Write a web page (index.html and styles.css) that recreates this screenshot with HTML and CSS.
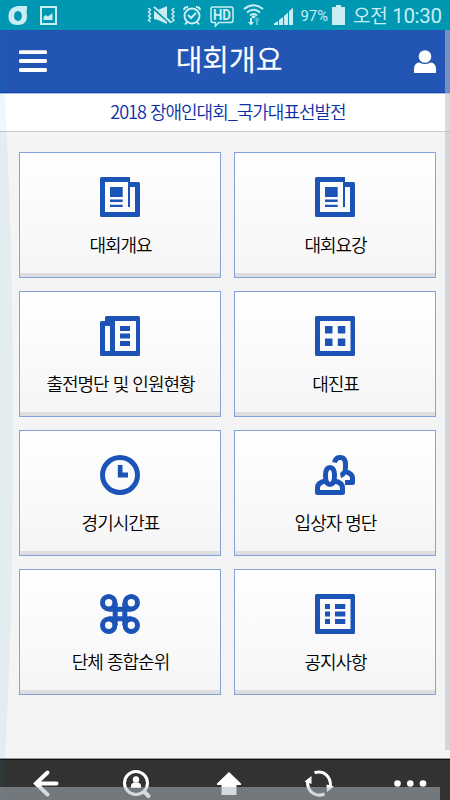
FILE: index.html
```html
<!DOCTYPE html>
<html lang="ko">
<head>
<meta charset="utf-8">
<meta name="viewport" content="width=device-width, initial-scale=1">
<title>대회개요</title>
<link rel="stylesheet" href="styles.css">
</head>
<body>
<svg class="defs" width="0" height="0" aria-hidden="true">
  <symbol id="news" viewBox="0 0 40 40">
    <path fill-rule="evenodd" d="M1.500 0H30V5H38.500Q40 5 40 6.500V38.500Q40 40 38.500 40H1.500Q0 40 0 38.500V1.500Q0 0 1.500 0ZM5 5V35H35V10H30V30H28V5ZM10 10H22.700V20H10ZM10 22.500H22.700V25H10ZM10 27.700H22.700V30H10Z"/>
  </symbol>
</svg>
<div class="screen">
  <div class="status">
    <svg class="status-icons" viewBox="0 0 350 30" width="350" height="30">
      <path class="fill" fill-rule="evenodd" d="M27 6V10.500H26.300Q27 13 27 16C27 22 24 25 17.500 25C11.500 25 8.500 22 8.500 16.500C8.500 10 12 6.500 19 6ZM18 11C12.800 11 12.800 21 18 21C23.200 21 23.200 11 18 11Z"/>
      <rect class="line" x="41" y="7" width="15" height="17"/>
      <path class="fill" d="M43.500 20V17L46 15L48 16.500L52.500 13V20Z"/>
      <path class="line thin" d="M148.500 8L150.500 10L148.500 12L150.500 14L148.500 16L150.500 18L148.500 20L150.500 22M174 8L172 10L174 12L172 14L174 16L172 18L174 20L172 22"/>
      <path class="fill" d="M154 11V19L158 20L167 24V22L154 10.500ZM158 10L167 6V18ZM153 7L155 6.500L172 22L170.500 23.500Z"/>
      <circle class="line" cx="192" cy="16" r="7.500"/>
      <path class="line" d="M188 15L191 18L196 13M184 10Q184 7 188 7M200 10Q200 7 196 7M187 22L185 24.500M197 22L199 24.500"/>
      <path class="line thin" d="M213 7H231Q233 7 233 9V20Q233 22.500 231 22.500H219L215.500 26V22.500H213Q211 22.500 211 20V9Q211 7 213 7Z"/>
      <text class="hd" x="213" y="20" textLength="18" lengthAdjust="spacingAndGlyphs">HD</text>
      <path class="line" d="M244 9Q253.500 1.500 263 9M247 12.500Q253.500 7 260 12.500M250 15.500Q253.500 12.500 257 15.500"/>
      <path class="fill" d="M253.500 15L256 17L253.500 18.500L251 17ZM250 18H252V22H254L251 25.500L248 22H250Z"/>
      <path class="fill dim" d="M256 25V20.500H254L257 17L260 20.500H258V25Z"/>
      <path class="fill" d="M274 25V23.500L278 21V25ZM279 25V20L283 17V25ZM284 25V16L288 12.500V25ZM289 25V11.500L293 7.500V25Z"/>
      <text class="percent" x="300.500" y="21" textLength="27.500" lengthAdjust="spacingAndGlyphs">97%</text>
      <path class="fill" d="M332 7H336V5H341V7H345V25H332Z"/>
    </svg>
    <span class="time"><b>오전</b> 10:30</span>
  </div>
  <header class="header">
    <svg class="menu" viewBox="0 0 28 24" width="28" height="24"><path d="M1.700 3.200H26.300M1.700 12H26.300M1.700 21H26.300"/></svg>
    <h1>대회개요</h1>
    <svg class="user" viewBox="0 0 22 24" width="22" height="24"><circle cx="11" cy="7.500" r="6.300"/><path d="M0 24V20Q0 14 5.500 13.500Q8 15 11 15Q14 15 16.500 13.500Q22 14 22 20V24Z"/></svg>
  </header>
  <div class="subtitle"><span>2018 장애인대회_국가대표선발전</span></div>
  <main class="grid">
    <a class="card"><svg class="icon" viewBox="0 0 40 40"><use href="#news"/></svg><span>대회개요</span></a>
    <a class="card"><svg class="icon" viewBox="0 0 40 40"><use href="#news"/></svg><span>대회요강</span></a>
    <a class="card"><svg class="icon" viewBox="0 0 40 40"><path fill-rule="evenodd" d="M6.500 0H38.500Q40 0 40 1.500V38.500Q40 40 38.500 40H1.500Q0 40 0 38.500V6.500Q0 5 1.500 5H5V1.500Q5 0 6.500 0ZM5 10V35H10V10ZM15 5V35H36V5ZM20 10H30V15H20ZM20 17.500H30V22.500H20ZM20 25H30V30H20Z"/></svg><span>출전명단 및 인원현황</span></a>
    <a class="card"><svg class="icon" viewBox="0 0 40 40"><path fill-rule="evenodd" d="M1.500 0H38.500Q40 0 40 1.500V38.500Q40 40 38.500 40H1.500Q0 40 0 38.500V1.500Q0 0 1.500 0ZM5 5V35H35.500V5ZM10 10H17.500V17.500H10ZM22.800 10H30.300V17.500H22.800ZM10 22.500H17.500V30H10ZM22.800 22.500H30.300V30H22.800Z"/></svg><span>대진표</span></a>
    <a class="card"><svg class="icon" viewBox="0 0 40 40"><path fill-rule="evenodd" d="M20 0A20 20 0 1 1 20 40A20 20 0 1 1 20 0ZM20 5A15 15 0 1 0 20 35A15 15 0 1 0 20 5ZM17.800 10H22.500V17.500H28V22.500H17.800Z"/></svg><span>경기시간표</span></a>
    <a class="card"><svg class="icon people" viewBox="0 0 40 40"><path d="M19.500 7.500C20.500 3.500 23 2.300 25.500 2.500C29 2.500 30.500 5.500 30.500 9C30.500 12 30.500 15 30 16.500Q37.500 18.500 37.500 23V27.500H30M25.500 20.500Q28 20 29 17"/><path d="M15 12.500C11 12.500 10.500 16 10.500 20.500C10.500 25 11.500 29.500 15 29.500C18.500 29.500 19.500 25 19.500 20.500C19.500 16 19 12.500 15 12.500ZM10.500 26Q2.500 27.500 2.500 33V37.500H27.500V33Q27.500 27.500 19.500 26"/></svg><span>입상자 명단</span></a>
    <a class="card"><svg class="icon command" viewBox="0 0 40 40"><circle cx="8.700" cy="8.700" r="6.200"/><circle cx="31.300" cy="8.700" r="6.200"/><circle cx="8.700" cy="31.300" r="6.200"/><circle cx="31.300" cy="31.300" r="6.200"/><path d="M15.200 8.700V31.300M24.800 8.700V31.300M8.700 15.200H31.300M8.700 24.800H31.300"/></svg><span>단체 종합순위</span></a>
    <a class="card"><svg class="icon" viewBox="0 0 40 40"><path fill-rule="evenodd" d="M1.500 0H38.500Q40 0 40 1.500V38.500Q40 40 38.500 40H1.500Q0 40 0 38.500V1.500Q0 0 1.500 0ZM5 5V35H35.500V5ZM10 10H15V15H10ZM20 10H30.300V15H20ZM10 17.500H15V22.500H10ZM20 17.500H30.300V22.500H20ZM10 25H15V30H10ZM20 25H30.300V30H20Z"/></svg><span>공지사항</span></a>
  </main>
  <nav class="toolbar">
    <svg viewBox="0 0 90 41" width="90" height="41"><path class="stroke" d="M47.500 13.500L36 24.500L47.500 35.500M37 24.500H56.500"/></svg>
    <svg viewBox="0 0 90 41" width="90" height="41"><circle class="stroke ring" cx="46" cy="24" r="11.500"/><path class="stroke" d="M54.500 33L58.500 37"/><circle cx="46" cy="20.500" r="3.200"/><path d="M41 29V27Q41 24 44 23.500H48Q51 24 51 27V29Z"/></svg>
    <svg viewBox="0 0 90 41" width="90" height="41"><path d="M49 13L61 24.500V26H56.500V36H41.500V26H37V24.500Z"/></svg>
    <svg viewBox="0 0 90 41" width="90" height="41"><path class="stroke arc" d="M44.500 13.700C54 10.500 61 18 60.500 27M54.500 35C46 38.500 37 33 37.500 22"/><path d="M34.500 22.500L41.500 17V25ZM56.500 25.500L64 27.500L57 33Z"/></svg>
    <svg viewBox="0 0 90 41" width="90" height="41"><circle cx="37.500" cy="24.500" r="3.300"/><circle cx="50.300" cy="24.500" r="3.300"/><circle cx="63" cy="24.500" r="3.300"/></svg>
  </nav>
  <svg class="edge" viewBox="0 0 14 770" width="14" height="770"><path d="M0 0H2.500Q4 40 5.500 80Q13 220 13 390Q13 560 8 665Q5 730 3 770H0Z"/></svg>
  <div class="scroll-v"></div>
  <div class="scroll-h"></div>
</div>
</body>
</html>
```
FILE: styles.css
```css
* { box-sizing: border-box; }
body { margin: 0; font-family: "Noto Sans CJK KR", sans-serif; font-weight: 300; }
.defs { position: absolute; }
.screen {
  position: relative;
  display: flex;
  flex-direction: column;
  width: 450px;
  height: 800px;
  overflow: hidden;
  background: #f4f4f4;
}
.status {
  display: flex;
  align-items: center;
  height: 30px;
  flex: none;
  background: #0097b2;
  color: #c9edf2;
}
.status-icons { flex: none; }
.status .fill { fill: #c9edf2; }
.status .dim { opacity: .45; }
.status .line { fill: none; stroke: #c9edf2; stroke-width: 2; }
.status .thin { stroke-width: 1.500; }
.hd { font: bold 14px Roboto, sans-serif; fill: #c9edf2; }
.percent { font: 15px Roboto, sans-serif; fill: #c9edf2; }
.time {
  margin-left: 3px;
  font: 20.500px/30px Roboto, "Noto Sans CJK KR", sans-serif;
  letter-spacing: -.3px;
  white-space: nowrap;
  padding-top: 2px;
}
.time b { font-weight: 400; font-size: 19px; }
.header {
  display: flex;
  align-items: center;
  justify-content: space-between;
  height: 63px;
  flex: none;
  padding: 0 14px 0 19px;
  background: #2255b4;
  border-bottom: 1px solid #0c44ae;
}
.menu { fill: none; stroke: #fff; stroke-width: 3.800; stroke-linecap: round; }
.user { fill: #fff; }
h1 {
  margin: 0;
  padding: 0 3px 6px 0;
  font-size: 29px;
  line-height: 44px;
  font-weight: 350;
  color: #fff;
  -webkit-text-stroke: .3px #fff;
}
.subtitle {
  height: 39px;
  flex: none;
  padding-left: 6px;
  background: #fff;
  border-top: 1px solid #adc0e5;
  border-bottom: 1px solid #ccc;
  font-size: 18px;
  font-weight: 350;
  line-height: 35px;
  letter-spacing: -1px;
  text-align: center;
  color: #0b2fa8;
}
.grid {
  flex: 1;
  display: grid;
  grid-template-columns: 202px 202px;
  grid-auto-rows: 126px;
  gap: 13px;
  padding: 20px 0 0 19px;
}
.card {
  display: flex;
  flex-direction: column;
  align-items: center;
  gap: 12px;
  padding-top: 24px;
  border: 1px solid #84a3dd;
  background: linear-gradient(#fff, #f5f5f5);
  box-shadow: inset 0 -4px #dcdddf;
  font-size: 18px;
  font-weight: 350;
  line-height: 30px;
  letter-spacing: -1px;
  color: #000;
}
.card span { padding-left: 1px; }
.icon { width: 40px; height: 40px; fill: #1c53b6; flex: none; }
.people, .command { fill: none; stroke: #1c53b6; stroke-width: 5; stroke-linejoin: round; }
.toolbar {
  display: flex;
  height: 42px;
  flex: none;
  background: #323232;
  border-top: 1px solid #999;
  box-shadow: inset 0 1px #111;
  fill: #fff;
}
.toolbar .stroke { fill: none; stroke: #fff; stroke-width: 4; stroke-linecap: round; }
.toolbar .ring, .toolbar .arc { stroke-width: 3; stroke-linecap: butt; }
.edge { position: absolute; left: 0; top: 30px; fill: rgba(0, 151, 176, .065); }
.scroll-v {
  position: absolute;
  right: 0;
  top: 30px;
  width: 5px;
  height: 720px;
  background: rgba(180, 192, 200, .56);
}
.scroll-h {
  position: absolute;
  left: 0;
  bottom: 0;
  width: 440px;
  height: 13px;
  background: rgba(173, 185, 192, .52);
}
```
